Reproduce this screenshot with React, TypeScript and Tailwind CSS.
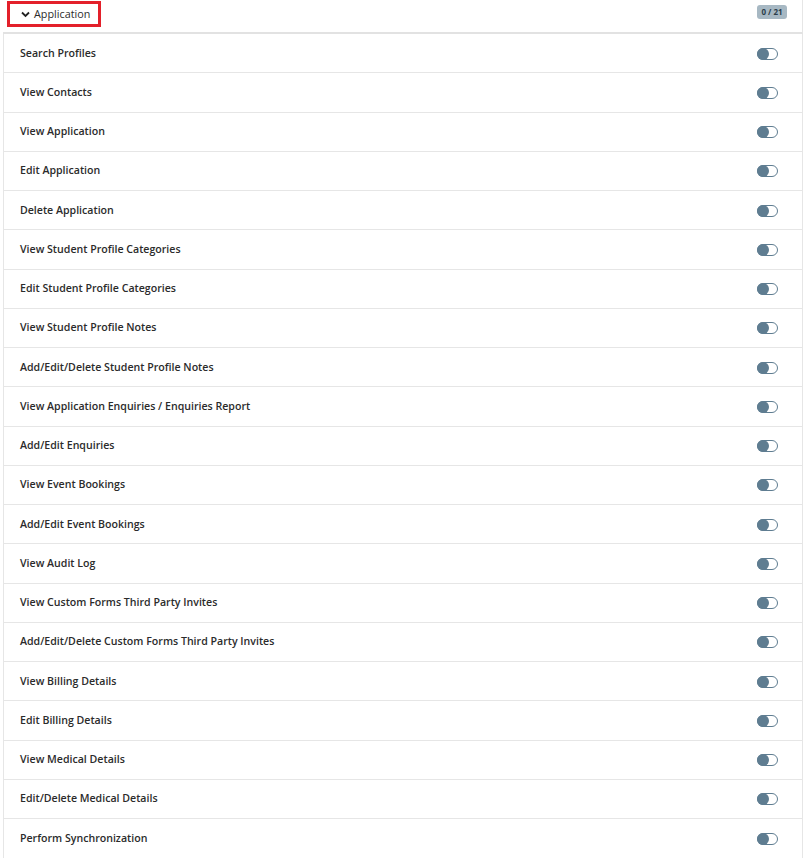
import React from 'react';

const permissions = [
  'Search Profiles',
  'View Contacts',
  'View Application',
  'Edit Application',
  'Delete Application',
  'View Student Profile Categories',
  'Edit Student Profile Categories',
  'View Student Profile Notes',
  'Add/Edit/Delete Student Profile Notes',
  'View Application Enquiries / Enquiries Report',
  'Add/Edit Enquiries',
  'View Event Bookings',
  'Add/Edit Event Bookings',
  'View Audit Log',
  'View Custom Forms Third Party Invites',
  'Add/Edit/Delete Custom Forms Third Party Invites',
  'View Billing Details',
  'Edit Billing Details',
  'View Medical Details',
  'Edit/Delete Medical Details',
  'Perform Synchronization',
];

const Toggle: React.FC = () => (
  <span className="relative inline-block w-[21px] h-[12px] rounded-full border border-[#5f7d91] bg-white">
    <span className="absolute left-[-1px] top-[-1px] w-[12px] h-[12px] rounded-full bg-[#5f7d91]" />
  </span>
);

export default function App() {
  return (
    <div className="w-full bg-white px-[3px] font-['Open_Sans',sans-serif] text-[#2b2b2b]">
      <div className="h-[34px] flex items-start justify-between border-b-2 border-r border-[#e2e2e2] border-r-[#e6e6e6]">
        <div className="ml-[4px] mt-[1px] h-[26px] w-[94px] border-[3px] border-[#e3202a] flex items-center pl-[11px] gap-[4px]">
          <svg width="9" height="7" viewBox="0 0 9 7" fill="none">
            <path d="M1 1.5 L4.5 5 L8 1.5" stroke="#222" strokeWidth="1.8" />
          </svg>
          <span className="text-[10.8px] leading-none">Application</span>
        </div>
        <span className="mt-[5px] mr-[15px] h-[14px] w-[30px] rounded-[3px] bg-[#a7b8c3] text-[#2b3d4a] text-[8px] font-bold flex items-center justify-center">
          0 / 21
        </span>
      </div>
      <div className="border-l border-r border-b-2 border-[#e6e6e6]">
        {permissions.map((p) => (
          <div
            key={p}
            className="h-[39.25px] pt-[1px] flex items-center justify-between border-b border-[#e6e6e6] last:border-b-0 pl-[16px] pr-[24px]"
          >
            <span className="text-[10.6px] font-semibold">{p}</span>
            <Toggle />
          </div>
        ))}
      </div>
    </div>
  );
}
